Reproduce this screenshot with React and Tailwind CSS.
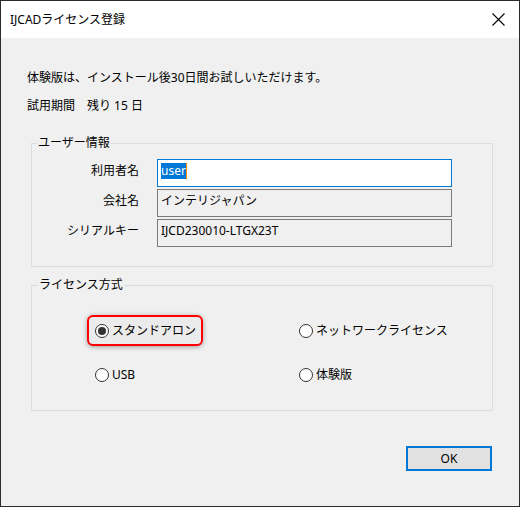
import { useState } from "react";

const fields = [
  { label: "利用者名", value: "user", active: true },
  { label: "会社名", value: "インテリジャパン" },
  { label: "シリアルキー", value: "IJCD230010-LTGX23T" },
];

const modes = ["スタンドアロン", "ネットワークライセンス", "USB", "体験版"];

function Radio({ checked }) {
  return (
    <span className="flex h-[14px] w-[14px] shrink-0 items-center justify-center rounded-full border border-[#333] bg-white">
      {checked && <span className="h-[8px] w-[8px] rounded-full bg-[#333]" />}
    </span>
  );
}

export default function App() {
  const [mode, setMode] = useState(0);

  return (
    <div className="flex h-[507px] w-[520px] flex-col border border-[#2b2b2b] bg-[#f0f0f0] font-['Noto_Sans','Noto_Sans_CJK_JP',sans-serif] text-[12px] leading-4 text-black">
      {/* title bar */}
      <div className="flex h-[37px] shrink-0 items-center justify-between bg-white pl-[9px] pr-[14px]">
        <span>IJCADライセンス登録</span>
        <svg width="13" height="13" viewBox="0 0 13 13" className="text-black">
          <path d="M0.5 0.5L12.5 12.5M12.5 0.5L0.5 12.5" stroke="currentColor" strokeWidth="1.1" />
        </svg>
      </div>

      <div className="flex flex-1 flex-col pt-[32px]">
        <p className="pl-[26px]">体験版は、インストール後30日間お試しいただけます。</p>
        <p className="mt-[12px] pl-[26px]">試用期間　残り 15 日</p>

        {/* user info */}
        <fieldset className="ml-[30px] mr-[26px] mt-[21px] border border-[#dcdcdc] pb-[19px] pt-[8px]">
          <legend className="ml-[5px] px-[1px]">ユーザー情報</legend>
          <div className="grid grid-cols-[107px_295px] gap-x-[18px] gap-y-[2px]">
            {fields.map((f) => (
              <div key={f.label} className="contents">
                <span className="pt-[4px] text-right">{f.label}</span>
                <div
                  className={`h-[28px] px-[3px] pt-[3px] ${
                    f.active ? "border border-[#0078d7] bg-white" : "border border-[#7a7a7a] bg-[#f0f0f0]"
                  }`}
                >
                  {f.active ? (
                    <span className="inline-flex items-center">
                      <span className="bg-[#0078d7] text-white">{f.value}</span>
                      <span className="h-[16px] w-[1px] bg-[#ff8c00]" />
                    </span>
                  ) : (
                    f.value
                  )}
                </div>
              </div>
            ))}
          </div>
        </fieldset>

        {/* license type */}
        <fieldset className="ml-[30px] mr-[26px] mt-[10px] border border-[#dcdcdc] pb-[20px] pt-[22px]">
          <legend className="ml-[6px] px-[1px]">ライセンス方式</legend>
          <div className="grid grid-cols-[204px_1fr] gap-y-[13px] pl-[55px]">
            {modes.map((m, i) => (
              <div key={m} className="flex">
                <button
                  type="button"
                  onClick={() => setMode(i)}
                  className={`flex items-center gap-[3px] rounded-[6px] border-2 pb-[5px] pl-[6px] pr-[5px] pt-[6px] ${
                    mode === i
                      ? "border-[#f00] bg-[#ebebeb] shadow-[0_1px_5px_rgba(0,0,0,0.35)]"
                      : "border-transparent"
                  }`}
                >
                  <Radio checked={mode === i} />
                  <span>{m}</span>
                </button>
              </div>
            ))}
          </div>
        </fieldset>

        <div className="mr-[27px] mt-[35px] flex justify-end">
          <button
            type="button"
            className="h-[25px] w-[86px] border-2 border-[#0078d7] bg-[#e1e1e1] leading-4"
          >
            OK
          </button>
        </div>
      </div>
    </div>
  );
}
